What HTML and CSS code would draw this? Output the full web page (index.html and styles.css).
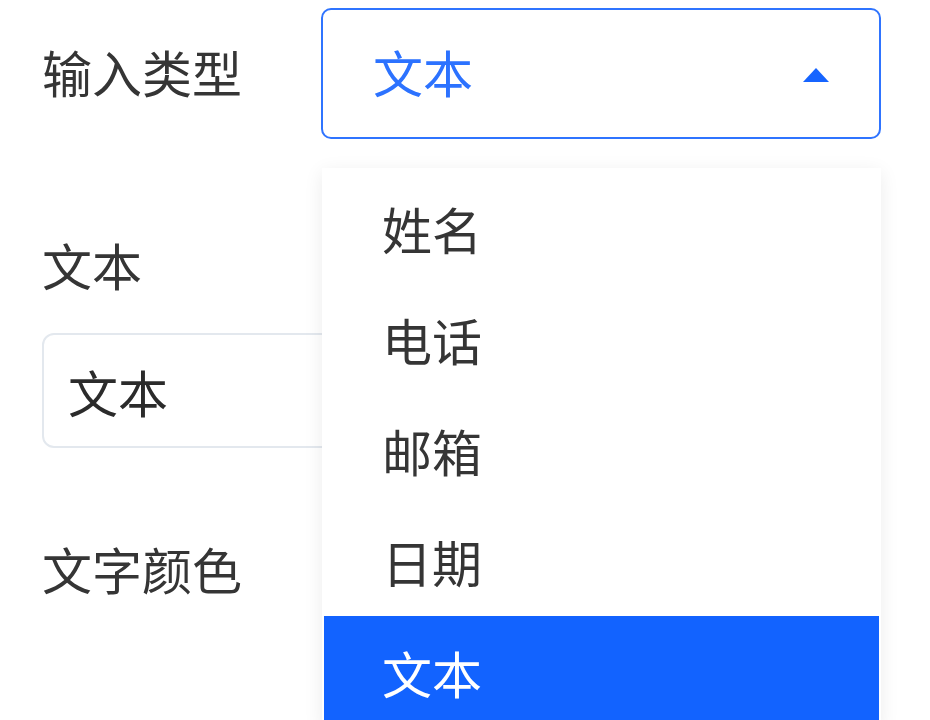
FILE: index.html
```html
<!DOCTYPE html>
<html lang="zh-CN">
<head>
    <meta charset="UTF-8">
    <meta name="viewport" content="width=device-width, initial-scale=1.0">
    <title>输入类型</title>
    <link rel="stylesheet" href="styles.css">
</head>
<body>
    <div class="form">
        <div class="row">
            <label class="label">输入类型</label>
            <div class="select open">
                <span class="select-value">文本</span>
                <span class="caret"></span>
            </div>
        </div>

        <div class="field">
            <label class="label">文本</label>
            <div class="input">文本</div>
        </div>

        <div class="field">
            <label class="label">文字颜色</label>
        </div>

        <!-- dropdown opened from the select -->
        <ul class="dropdown">
            <li class="option">姓名</li>
            <li class="option">电话</li>
            <li class="option">邮箱</li>
            <li class="option">日期</li>
            <li class="option selected">文本</li>
        </ul>
    </div>
</body>
</html>
```

FILE: styles.css
```css
body {
    margin: 0;
    background: #ffffff;
    font-family: "Noto Sans CJK SC", "Noto Sans", sans-serif;
    color: #333333;
}
.form {
    position: relative;
    box-sizing: border-box;
    height: 720px;
    overflow: hidden;
    padding: 8px 49px 0 42px;
}
.row {
    display: flex;
    align-items: center;
}
.label {
    display: block;
    font-size: 50px;
    line-height: 60px;
    color: #353535;
}
.row .label {
    width: 279px;
    flex-shrink: 0;
    margin-top: -6px;
}
.select {
    flex: 1;
    height: 127px;
    border: 2px solid #2f74ff;
    border-radius: 10px;
    display: flex;
    align-items: center;
    justify-content: space-between;
    padding: 0 50px 0 50px;
}
.select-value {
    font-size: 50px;
    color: #2c72ff;
    margin-top: -6px;
}
.caret {
    width: 0;
    height: 0;
    border-left: 13px solid transparent;
    border-right: 13px solid transparent;
    border-bottom: 14px solid #1664ff;
    margin-top: 2px;
}
.field {
    margin-top: 95px;
}
.field .label {
    margin-bottom: 39px;
}
.input {
    height: 111px;
    border: 2px solid #e3e8ee;
    border-radius: 12px;
    padding: 0 24px;
    display: flex;
    align-items: center;
    font-size: 50px;
    color: #2b2b2b;
    margin-bottom: -5px;
}
.dropdown {
    position: absolute;
    top: 168px;
    left: 322px;
    width: 555px;
    margin: 0;
    padding: 4px 2px 0 2px;
    list-style: none;
    background: #ffffff;
    box-shadow: 0 4px 18px rgba(0, 0, 0, 0.08);
}
.option {
    height: 111px;
    display: flex;
    align-items: center;
    padding-left: 58px;
    font-size: 50px;
    color: #353535;
}
.option.selected {
    background: #1263ff;
    color: #ffffff;
}
```
